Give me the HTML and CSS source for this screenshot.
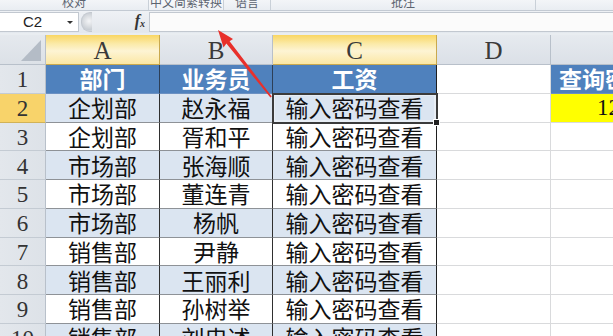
FILE: index.html
```html
<!DOCTYPE html>
<html>
<head>
<meta charset="utf-8">
<link rel="stylesheet" href="styles.css">
</head>
<body>
<div class="page">
  <div class="ribbon">
    <div class="grp g1"><span>校对</span></div>
    <div class="grp g2"><span>中文简繁转换</span></div>
    <div class="grp g3"><span>语言</span></div>
    <div class="grp g4"><span>批注</span></div>
    <div class="grp g5"></div>
  </div>
  <div class="fbar">
    <div class="namebox"><span class="nb-text">C2</span><span class="nb-arrow"></span></div>
    <div class="handle"></div>
    <div class="fxzone"><span class="fx">f<sub>x</sub></span></div>
    <div class="finput"></div>
  </div>
  <div class="band"></div>
  <div class="sheet">
    <div class="corner"><span class="tri"></span></div>
    <div class="ch sel">A</div>
    <div class="ch">B</div>
    <div class="ch sel">C</div>
    <div class="ch">D</div>
    <div class="ch">E</div>

    <div class="rh">1</div>
    <div class="th">部门</div>
    <div class="th">业务员</div>
    <div class="th last">工资</div>
    <div class="cell"></div>
    <div class="th ehead">查询密码</div>

    <div class="rh sel">2</div>
    <div class="td alt">企划部</div>
    <div class="td alt">赵永福</div>
    <div class="td alt last active">输入密码查看<span class="fill"></span></div>
    <div class="cell"></div>
    <div class="cell eyel">1234</div>

    <div class="rh">3</div>
    <div class="td">企划部</div>
    <div class="td">胥和平</div>
    <div class="td last">输入密码查看</div>
    <div class="cell"></div>
    <div class="cell"></div>

    <div class="rh">4</div>
    <div class="td alt">市场部</div>
    <div class="td alt">张海顺</div>
    <div class="td alt last">输入密码查看</div>
    <div class="cell"></div>
    <div class="cell"></div>

    <div class="rh">5</div>
    <div class="td">市场部</div>
    <div class="td">董连青</div>
    <div class="td last">输入密码查看</div>
    <div class="cell"></div>
    <div class="cell"></div>

    <div class="rh">6</div>
    <div class="td alt">市场部</div>
    <div class="td alt">杨帆</div>
    <div class="td alt last">输入密码查看</div>
    <div class="cell"></div>
    <div class="cell"></div>

    <div class="rh">7</div>
    <div class="td">销售部</div>
    <div class="td">尹静</div>
    <div class="td last">输入密码查看</div>
    <div class="cell"></div>
    <div class="cell"></div>

    <div class="rh">8</div>
    <div class="td alt">销售部</div>
    <div class="td alt">王丽利</div>
    <div class="td alt last">输入密码查看</div>
    <div class="cell"></div>
    <div class="cell"></div>

    <div class="rh">9</div>
    <div class="td">销售部</div>
    <div class="td">孙树举</div>
    <div class="td last">输入密码查看</div>
    <div class="cell"></div>
    <div class="cell"></div>

    <div class="rh">10</div>
    <div class="td alt">销售部</div>
    <div class="td alt">刘忠述</div>
    <div class="td alt last">输入密码查看</div>
    <div class="cell"></div>
    <div class="cell"></div>
  </div>
  <svg class="arrow" width="613" height="336" viewBox="0 0 613 336">
    <polygon points="218,30 233,39 229.6,41.2 271.8,96.6 270.4,97.6 226.4,43.6 223.5,47.5" fill="#e8302b"/>
  </svg>
</div>
</body>
</html>
```

FILE: styles.css
```css
html, body {
  margin: 0;
  padding: 0;
  background: #ffffff;
}
.page {
  position: relative;
  width: 613px;
  height: 336px;
  overflow: hidden;
  font-family: "Noto Sans CJK SC", "Noto Sans", sans-serif;
}
.ribbon {
  display: flex;
  height: 10px;
  background: linear-gradient(#f3f5f8, #e9edf2);
  border-bottom: 1px solid #c3cad3;
  overflow: hidden;
}
.grp {
  position: relative;
  height: 10px;
  border-right: 1px solid #c9d0d8;
  display: flex;
  justify-content: center;
  overflow: hidden;
}
.grp span {
  display: block;
  font-size: 12px;
  line-height: 12px;
  margin-top: -4px;
  color: #5c6470;
  white-space: nowrap;
}
.g1 { width: 148px; }
.g2 { width: 74px; background: linear-gradient(#f8f9fb, #eef1f5); }
.g3 { width: 46px; }
.g4 { width: 264px; }
.g5 { flex: 1; border-right: none; }
.fbar {
  display: flex;
  height: 22px;
  background: linear-gradient(#eef1f5, #e3e8ee);
  align-items: center;
}
.namebox {
  width: 78px;
  height: 18px;
  background: #ffffff;
  border: 1px solid #c2c8d0;
  border-left: none;
  display: flex;
  align-items: center;
  position: relative;
}
.nb-text {
  font-family: "Liberation Sans", Arial, sans-serif;
  font-size: 15px;
  color: #222;
  margin-left: 23px;
  line-height: 18px;
}
.nb-arrow {
  position: absolute;
  left: 67px;
  top: 8px;
  width: 0;
  height: 0;
  border-left: 3px solid transparent;
  border-right: 3px solid transparent;
  border-top: 3px solid #333;
}
.handle {
  width: 10px;
  height: 18px;
  margin-left: 2px;
  border-radius: 9px 0 0 9px;
  background: radial-gradient(circle at 70% 45%, #f4f5f7 0, #dcdfe3 40%, #c9ced4 70%, #e6e9ed 100%);
  border: 1px solid #c3c8cf;
  border-right: none;
}
.fxzone {
  width: 57px;
  height: 20px;
  display: flex;
  align-items: center;
  justify-content: flex-end;
  background: linear-gradient(#eef1f5, #e3e7ec);
}
.fx {
  font-family: "Liberation Serif", "Times New Roman", serif;
  font-style: italic;
  font-weight: bold;
  font-size: 16px;
  color: #333;
  margin-right: 4px;
  line-height: 16px;
}
.fx sub {
  font-size: 10px;
  vertical-align: -1px;
}
.finput {
  flex: 1;
  height: 18px;
  background: #fbfbfb;
  border: 1px solid #c2c8d0;
  border-right: none;
}
.band {
  height: 2px;
  background: #e9edf1;
}
.sheet {
  display: grid;
  grid-template-columns: 46px 114px 113px 164px 114px 140px;
  grid-template-rows: 30px repeat(10, 28.75px);
  width: 691px;
}
.sheet > div {
  box-sizing: border-box;
  display: flex;
  align-items: center;
  justify-content: center;
  overflow: hidden;
  white-space: nowrap;
  line-height: 1;
}
.corner {
  position: relative;
  background: linear-gradient(#e5e9ee, #dce1e7);
  border-right: 1px solid #b8c0ca;
  border-bottom: 1px solid #b8c0ca;
}
.tri {
  position: absolute;
  right: 4px;
  bottom: 3px;
  width: 0;
  height: 0;
  border-left: 20px solid transparent;
  border-bottom: 21px solid #b4bcc6;
}
.ch {
  font-family: "Liberation Serif", "Times New Roman", serif;
  font-size: 25px;
  color: #3a3a3a;
  background: linear-gradient(#e6eaef, #dbe0e7);
  border-right: 1px solid #b8c0ca;
  border-bottom: 1px solid #b8c0ca;
  padding-top: 2px;
}
.ch.sel {
  background: linear-gradient(#f9d663 0%, #fbeaa8 30%, #fdf4d4 55%, #fbe7a4 100%);
  border-right: 1px solid #c9a94e;
  border-bottom: 1px solid #c9a94e;
}
.rh {
  font-family: "Liberation Serif", "Times New Roman", serif;
  font-size: 23px;
  color: #333;
  background: linear-gradient(90deg, #e3e7ec, #dde2e8);
  border-right: 1px solid #b8c0ca;
  border-bottom: 1px solid #c4cbd3;
  padding-top: 2px;
}
.rh.sel {
  background: #f8d36a;
  border-bottom: 1px solid #d1b257;
}
.th {
  background: #4f81bd;
  color: #ffffff;
  font-size: 23px;
  font-weight: bold;
  border-right: 1px solid #2d3f57;
  border-bottom: 1px solid #6b90c2;
}
.td {
  background: #ffffff;
  color: #111;
  font-size: 23px;
  border-right: 1px solid #2f2f2f;
  border-bottom: 1px solid #8e9297;
}
.td.alt {
  background: #dbe5f1;
}
.td.last, .th.last {
  border-right: 1px solid #1f1f1f;
}
.cell {
  background: #ffffff;
  border-right: 1px solid #d9dadc;
  border-bottom: 1px solid #d9dadc;
}
.ehead {
  justify-content: flex-start !important;
  padding-left: 8px;
  border-right: none;
}
.eyel {
  background: #ffff00 !important;
  justify-content: flex-start !important;
  padding-left: 46px;
  font-family: "Liberation Serif", "Times New Roman", serif;
  font-size: 23px;
  color: #111;
}
.active {
  position: relative;
  overflow: visible !important;
  outline: 2px solid #3b3b3b;
  outline-offset: -1px;
  box-shadow: inset 0 0 0 2px #e8eef5;
  z-index: 2;
}
.fill {
  position: absolute;
  right: -4px;
  bottom: -4px;
  width: 5px;
  height: 5px;
  background: #222;
  border: 1px solid #ffffff;
}
.arrow {
  position: absolute;
  left: 0;
  top: 0;
  z-index: 5;
}
```
